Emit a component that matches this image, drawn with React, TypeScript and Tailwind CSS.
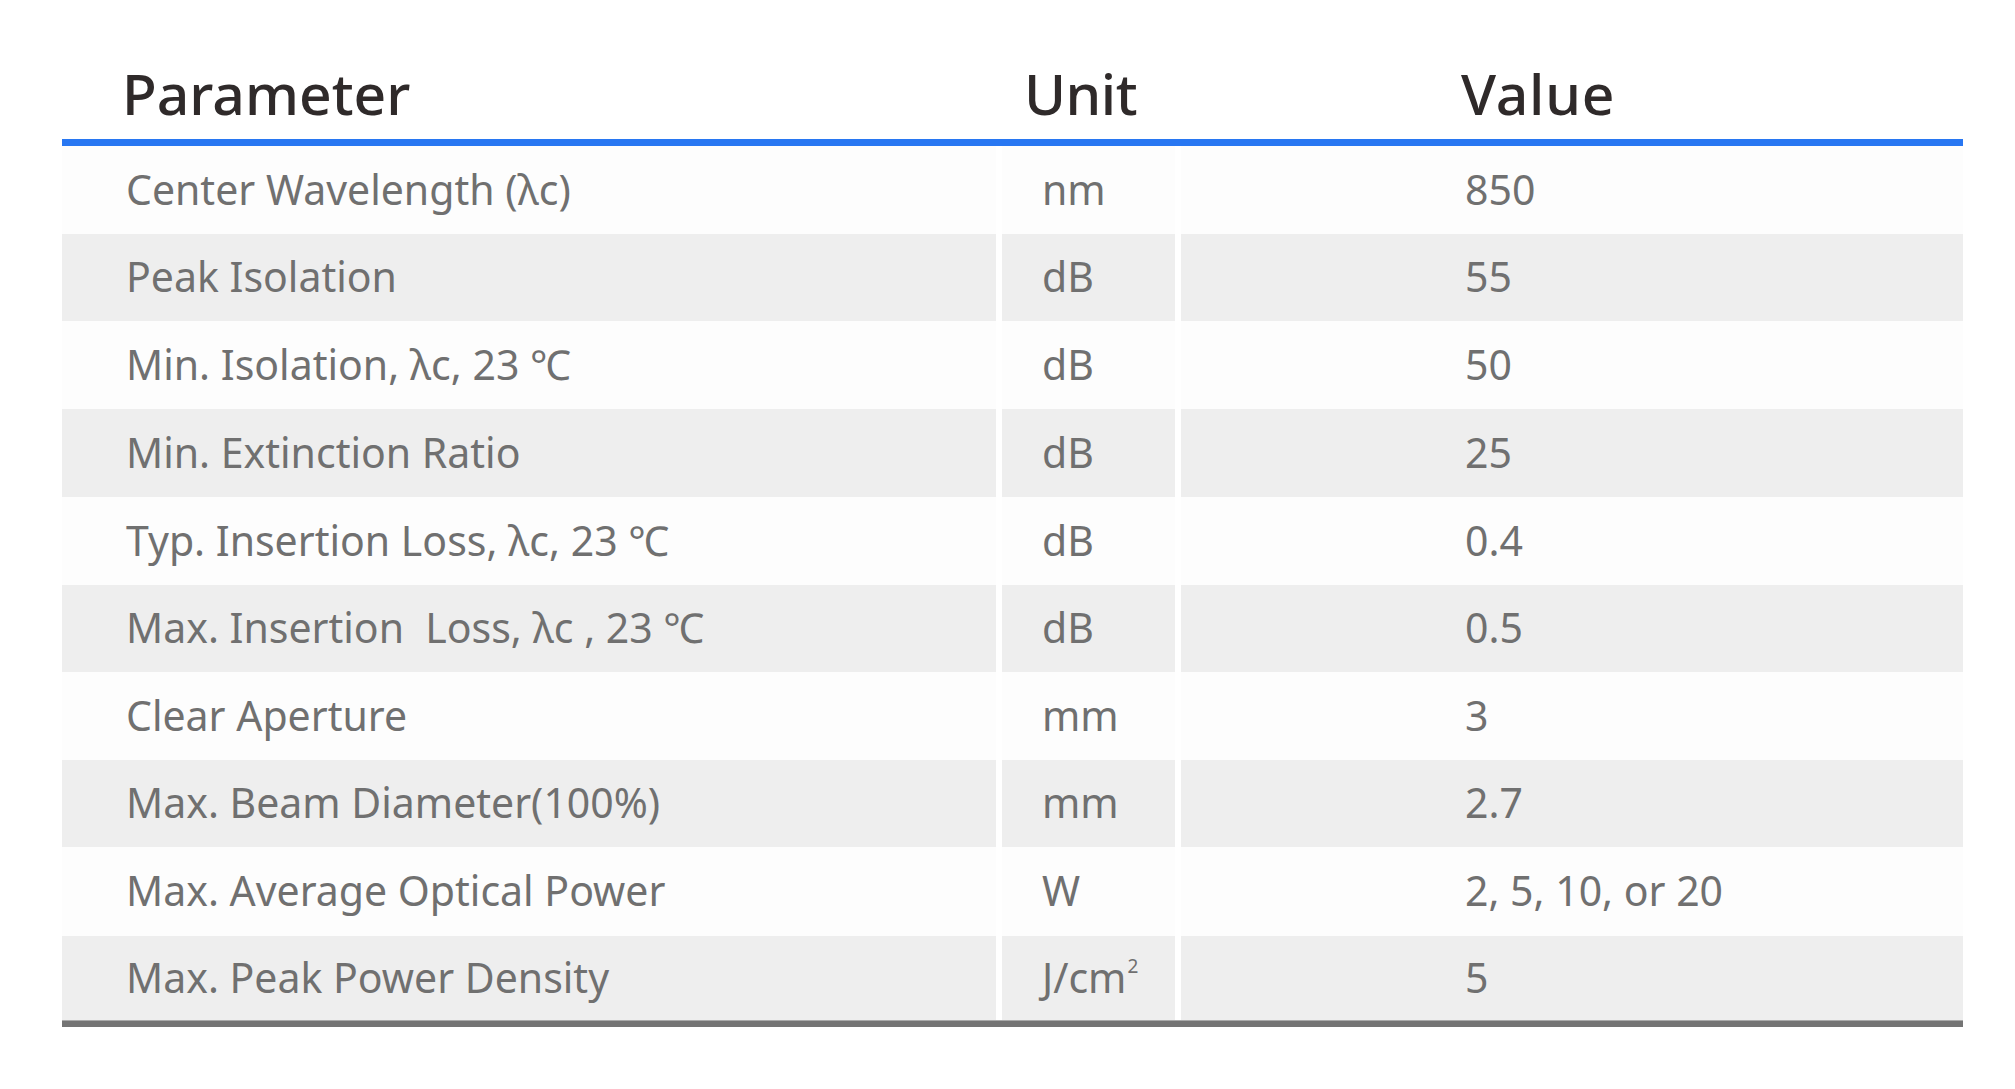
const rows = [
  { param: "Center Wavelength (λc)", unit: "nm", value: "850", h: "h-[88px]" },
  { param: "Peak Isolation", unit: "dB", value: "55", h: "h-[87px]" },
  { param: "Min. Isolation, λc, 23 ℃", unit: "dB", value: "50", h: "h-[88px]" },
  { param: "Min. Extinction Ratio", unit: "dB", value: "25", h: "h-[88px]" },
  { param: "Typ. Insertion Loss, λc, 23 ℃", unit: "dB", value: "0.4", h: "h-[88px]" },
  { param: "Max. Insertion  Loss, λc , 23 ℃", unit: "dB", value: "0.5", h: "h-[87px]" },
  { param: "Clear Aperture", unit: "mm", value: "3", h: "h-[88px]" },
  { param: "Max. Beam Diameter(100%)", unit: "mm", value: "2.7", h: "h-[87px]" },
  { param: "Max. Average Optical Power", unit: "W", value: "2, 5, 10, or 20", h: "h-[89px]" },
  { param: "Max. Peak Power Density", unit: "J/cm", sup: "2", value: "5", h: "h-[84px]" },
];

export default function App() {
  return (
    <div className="w-[2015px] h-[1089px] bg-white font-['Noto_Sans',sans-serif]">
      <div className="ml-[62px] w-[1901px]">
        {/* header */}
        <div className="grid h-[139px] grid-cols-[934px_173px_782px] gap-x-[6px] items-end pb-[11px] text-[57px] font-medium leading-none text-[#2f2a2a]">
          <div className="pl-[60px] pb-[6px]">Parameter</div>
          <div className="pl-[22px] pb-[6px] tracking-[-0.5px]">Unit</div>
          <div className="pl-[280px] pb-[6px] tracking-[0.8px]">Value</div>
        </div>
        <div className="h-[7px] bg-[#2877f2]" />

        {/* body */}
        {rows.map((row, i) => {
          const cell = i % 2 === 1 ? "bg-[#eeeeee]" : "bg-[#fdfdfd]";
          return (
            <div
              key={row.param}
              className={`grid grid-cols-[934px_173px_782px] gap-x-[6px] text-[41px] leading-none text-[#707070] ${row.h}`}
            >
              <div className={`flex items-center pl-[64px] pb-[2px] whitespace-pre ${cell}`}>{row.param}</div>
              <div className={`flex items-center pl-[40px] pb-[2px] ${cell}`}>
                {row.unit}
                {row.sup && <span className="text-[19px] leading-none mb-[22px] ml-[1px]">{row.sup}</span>}
              </div>
              <div className={`flex items-center pl-[284px] pb-[2px] ${cell}`}>{row.value}</div>
            </div>
          );
        })}
        <div className="h-[7px] bg-[#747474] border-t border-[#a9a9a9]" />
      </div>
    </div>
  );
}
